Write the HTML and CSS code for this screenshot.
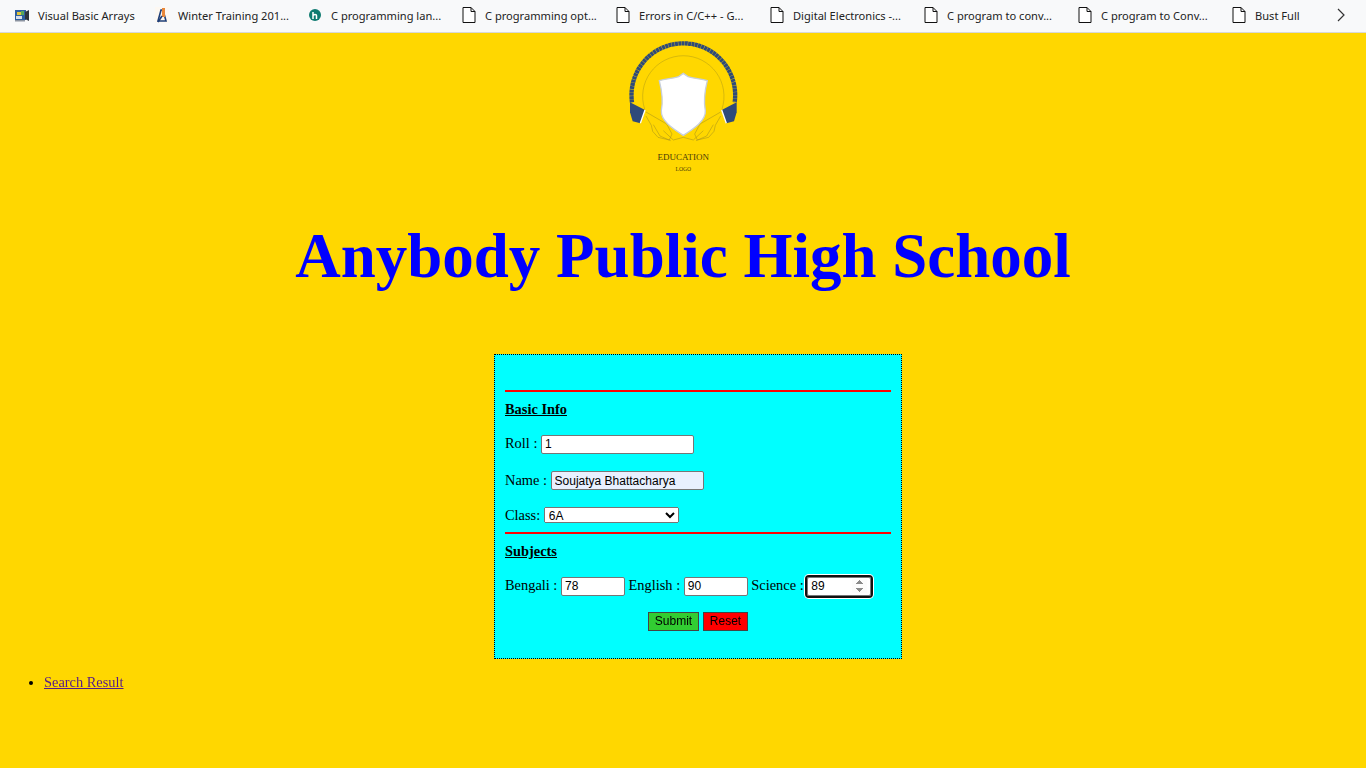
FILE: index.html
```html
<!DOCTYPE html>
<html lang="en">
<head>
  <meta charset="UTF-8" />
  <meta name="viewport" content="width=device-width, initial-scale=1.0" />
  <title>Anybody Public High School</title>
  <link rel="stylesheet" href="styles.css">
</head>
<body>
  <svg width="0" height="0" class="defs">
    <symbol id="page" viewBox="0 0 14 16">
      <path d="M1 .5h8l4 4v11H1z M9 .5v4h4" fill="#fff" stroke="#111" stroke-width="1" />
    </symbol>
  </svg>

  <div class="bookmarks">
    <a class="mark mark-first">
      <svg class="icon" viewBox="0 0 16 16">
        <rect x="1" y="3" width="11" height="10" fill="#2f5f9e" />
        <rect x="3" y="5" width="4" height="3" fill="#e4c63a" />
        <rect x="7" y="4" width="3" height="4" fill="#58a85a" />
        <rect x="2" y="9" width="6" height="3" fill="#d9dfe8" />
        <path d="M11 5l4-2v11l-4-2z" fill="#30343c" />
        <rect x="1" y="13" width="10" height="1.5" fill="#8b93a0" />
      </svg>
      <span>Visual Basic Arrays</span>
    </a>
    <a class="mark mark-second">
      <svg class="icon" viewBox="0 0 16 16">
        <rect x="1" y="0" width="14" height="16" fill="#fdf8f2" />
        <path d="M4 14l3-11h2l3 11z" fill="none" stroke="#1f3f78" stroke-width="1.6" />
        <path d="M8 1h3v9H8z" fill="#e8873a" />
        <path d="M4 15l4-6" stroke="#1f3f78" stroke-width="1.6" />
      </svg>
      <span>Winter Training 201...</span>
    </a>
    <a class="mark">
      <svg class="icon" viewBox="0 0 16 16">
        <circle cx="8" cy="8" r="6" fill="#0f7a70" />
        <path d="M6 12V5M6 8.500c1-1.500 3.500-1.500 3.500 0V12" fill="none" stroke="#fff" stroke-width="1.500" />
      </svg>
      <span>C programming lan...</span>
    </a>
    <a class="mark"><svg class="icon"><use href="#page" /></svg><span>C programming opt...</span></a>
    <a class="mark"><svg class="icon"><use href="#page" /></svg><span>Errors in C/C++ - G...</span></a>
    <a class="mark"><svg class="icon"><use href="#page" /></svg><span>Digital Electronics -...</span></a>
    <a class="mark"><svg class="icon"><use href="#page" /></svg><span>C program to conv...</span></a>
    <a class="mark"><svg class="icon"><use href="#page" /></svg><span>C program to Conv...</span></a>
    <a class="mark mark-last"><svg class="icon"><use href="#page" /></svg><span>Bust Full</span></a>
    <svg class="more" viewBox="0 0 10 14">
      <path d="M2 1l6 6-6 6" fill="none" stroke="#333" stroke-width="1.200" />
    </svg>
  </div>

  <svg class="logo" viewBox="-6 0 450 438">
    <path d="M104 225A122 122 0 1 1 336 225" fill="none" stroke="#9c8a1c" stroke-width="1.200" />
    <path d="M66 205A155.500 155.500 0 1 1 374 205" fill="none" stroke="#2f4a7a" stroke-width="13" stroke-dasharray="9 1" />
    <path d="M60 205l45 23-14 40-23-6-8-27z" fill="#2f4a7a" />
    <path d="M380 205l-45 23 14 40 23-6 8-27z" fill="#2f4a7a" />
    <path d="M105 228l-14 40M335 228l14 40" stroke="#fff" stroke-width="4" />
    <g fill="none" stroke="#a08c1e" stroke-width="1.500">
      <path d="M108 234l62 36 16 30-8 18-34-8-16-18-4-18-16-28" />
      <path d="M332 234l-62 36-16 30 8 18 34-8 16-18 4-18 16-28" />
      <path d="M130 272l20 34 32 14M310 272l-20 34-32 14" />
      <path d="M160 290l30 28 30-8 30 8 30-28" />
    </g>
    <path d="M220 118l-14 10c-18 6-38 6-58 12 8 32 12 60 6 90-2 30 34 54 66 74 32-20 68-44 66-74-6-30-2-58 6-90-20-6-40-6-58-12z" fill="#fff" stroke="#c7cfdc" stroke-width="4" />
    <text class="logo-name" x="220" y="379" text-anchor="middle">EDUCATION</text>
    <text class="logo-sub" x="220" y="412" text-anchor="middle">LOGO</text>
  </svg>

  <h1 class="title">Anybody Public High School</h1>

  <form class="entry" onsubmit="return false">
    <hr class="rule rule-top" />
    <p class="head"><u><b>Basic Info</b></u></p>
    <p class="row">Roll : <input type="text" class="field" value="1" /></p>
    <p class="row">Name : <input type="text" class="field filled" value="Soujatya Bhattacharya" /></p>
    <p class="row row-class">Class:
      <select class="pick">
        <option>6A</option>
        <option>6B</option>
      </select>
    </p>
    <hr class="rule" />
    <p class="head"><u><b>Subjects</b></u></p>
    <p class="row">Bengali : <input type="number" class="field mark-box" value="78" />
      English : <input type="number" class="field mark-box" value="90" />
      Science : <input type="number" class="field mark-box" value="89" autofocus /></p>
    <p class="actions">
      <button class="btn btn-submit">Submit</button>
      <button type="reset" class="btn btn-reset">Reset</button>
    </p>
  </form>

  <ul class="links">
    <li><a href="#">Search Result</a></li>
  </ul>
</body>
</html>
```

FILE: styles.css
```css
body {
  margin: 0;
  background-color: #ffd700;
  font-family: "Liberation Serif", serif;
  font-size: 14.4px;
  color: #000;
}
.defs {
  display: block;
  height: 0;
}
.bookmarks {
  display: flex;
  align-items: center;
  box-sizing: border-box;
  height: 33px;
  padding: 0 0 2px 14px;
  background-color: #f8f9fa;
  border-bottom: 1px solid #d8d8d8;
  font-family: "Noto Sans", sans-serif;
  font-size: 11.1px;
  color: #222;
}
.mark {
  display: flex;
  align-items: center;
  width: 154px;
  white-space: nowrap;
}
.mark-first {
  width: 140px;
}
.mark-second {
  width: 153px;
}
.mark-last {
  width: 105px;
}
.icon {
  width: 16px;
  height: 16px;
  margin-right: 8px;
  flex-shrink: 0;
}
.more {
  width: 10px;
  height: 14px;
}
.logo {
  display: block;
  width: 150px;
  height: 146px;
  margin: 1px auto 0;
}
.logo-name {
  font-size: 27px;
  fill: #4a3c08;
}
.logo-sub {
  font-size: 17px;
  fill: #4a3c08;
}
.title {
  margin: 39px 0 0;
  text-align: center;
  font-size: 63px;
  line-height: 74px;
  color: #0000ff;
}
.entry {
  box-sizing: border-box;
  width: 408px;
  height: 305px;
  margin: 61px 0 0 494px;
  padding: 35px 10px 0;
  background-color: #00ffff;
  border: 1px dotted #000;
}
.rule {
  height: 2px;
  margin: 0;
  border: 0;
  background-color: #ff0000;
}
.head {
  margin: 8px 0 15px;
  line-height: 18px;
}
.row {
  margin: 0 0 16px;
  line-height: 20px;
}
.row-class {
  margin-bottom: 7px;
  line-height: 19px;
}
.field {
  box-sizing: border-box;
  width: 153px;
  height: 19px;
  padding: 1px 3px;
  border: 1px solid #767676;
  border-radius: 2px;
  font-family: "Liberation Sans", sans-serif;
  font-size: 12px;
}
.field:focus {
  outline: 2px solid #111;
  outline-offset: 0;
  box-shadow: 0 0 0 3px #fff;
}
.filled {
  background-color: #e8f0fe;
}
.pick {
  width: 135px;
  height: 16px;
  font-family: "Liberation Sans", sans-serif;
  font-size: 12px;
}
.mark-box {
  width: 64px;
}
.actions {
  margin: 0;
  text-align: center;
}
.btn {
  height: 19px;
  padding: 0 6px;
  border: 1px solid #444;
  font-family: "Liberation Sans", sans-serif;
  font-size: 12px;
  color: #000;
}
.btn-submit {
  background-color: #32cd32;
}
.btn-reset {
  background-color: #ff0000;
}
.links {
  margin: 15px 0 0;
  padding-left: 44px;
}
.links a {
  color: #551a8b;
}
```
